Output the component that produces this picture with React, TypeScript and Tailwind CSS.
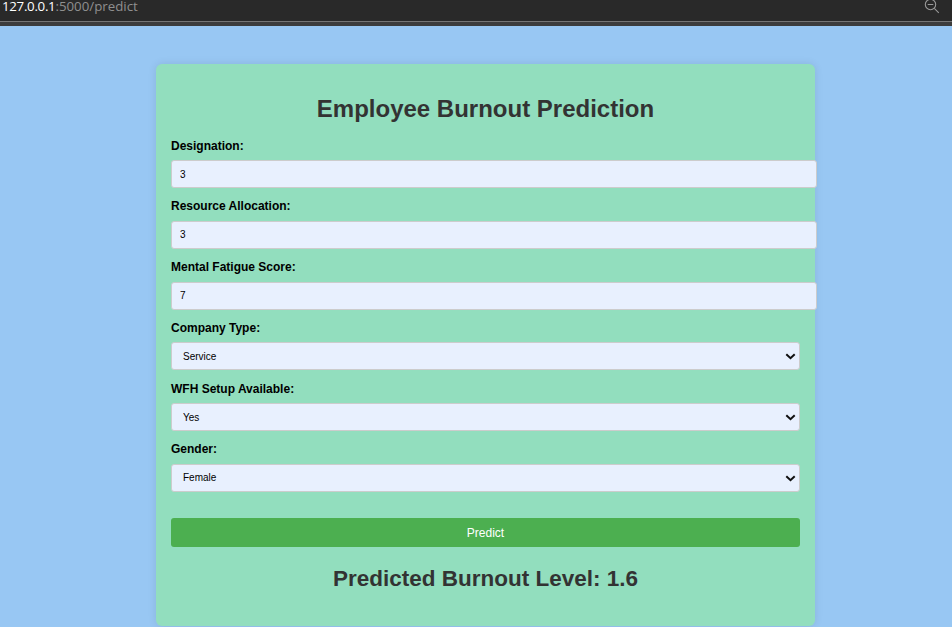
const FIELD =
  'block h-[28px] rounded-[3px] border border-[#ccc] bg-[#e8f0fe] text-[10px] text-black outline-none';

function Label({ text }: { text: string }) {
  return <label className="block h-[21.55px] text-[12px] leading-[14px] font-bold text-black">{text}</label>;
}

function TextField({ label, value }: { label: string; value: string }) {
  return (
    <div className="h-[60.7px]">
      <Label text={label} />
      <input className={`${FIELD} w-[646px] px-[8px]`} defaultValue={value} />
    </div>
  );
}

function SelectField({ label, value }: { label: string; value: string }) {
  return (
    <div className="h-[60.7px]">
      <Label text={label} />
      <div className="relative w-[629px]">
        <select className={`${FIELD} w-full appearance-none px-[11px]`} defaultValue={value}>
          <option>{value}</option>
        </select>
        <svg
          className="pointer-events-none absolute top-[11px] right-[4px]"
          width="11"
          height="7"
          viewBox="0 0 11 7"
          fill="none"
          stroke="#101010"
          strokeWidth="2"
        >
          <path d="M1.3 1.2 L5.5 5.2 L9.7 1.2" />
        </svg>
      </div>
    </div>
  );
}

export default function App() {
  return (
    <div className="flex h-[627px] w-[952px] flex-col overflow-hidden bg-[#98c7f3] font-['Liberation_Sans',Arial,sans-serif]">
      <header className="h-[26px] shrink-0 border-b-[4px] border-[#3c3c3c] bg-[#292929]">
        <div className="flex h-[22px] justify-between border-b border-[#757575]">
          <div className="ml-[2px] font-['Open_Sans','Noto_Sans',sans-serif] text-[13.3px] leading-[12px] whitespace-nowrap text-[#8f8f8f]">
            <span className="font-medium tracking-[-0.3px] text-white">127.0.0.1</span>:5000/predict
          </div>
          <svg className="mr-[12px] -mt-[2px]" width="16" height="16" viewBox="0 0 16 16" fill="none" stroke="#999" strokeWidth="1.1">
            <circle cx="6.5" cy="6.5" r="5.2" />
            <path d="M3.7 6.5h5.6M10.3 10.3l4.5 4.5" />
          </svg>
        </div>
      </header>
      <main className="mt-[38px] ml-[156px] h-[562px] w-[659px] shrink-0 rounded-[6px] bg-[#92debe] pl-[15px] shadow-[0_0_8px_rgba(0,0,0,0.1)]">
        <h1 className="w-[629px] pt-[31px] text-center text-[24px] leading-[28px] font-bold text-[#333]">
          Employee Burnout Prediction
        </h1>
        <form className="pt-[15.75px]">
          <TextField label="Designation:" value="3" />
          <TextField label="Resource Allocation:" value="3" />
          <TextField label="Mental Fatigue Score:" value="7" />
          <SelectField label="Company Type:" value="Service" />
          <SelectField label="WFH Setup Available:" value="Yes" />
          <SelectField label="Gender:" value="Female" />
          <button type="button" className="mt-[15.1px] block h-[29px] w-[629px] rounded-[3px] bg-[#4caf50] pt-[1px] text-[12px] text-white">
            Predict
          </button>
        </form>
        <h2 className="mt-[17.6px] w-[629px] text-center text-[22.5px] leading-[28px] font-bold text-[#333]">
          Predicted Burnout Level: 1.6
        </h2>
      </main>
    </div>
  );
}
